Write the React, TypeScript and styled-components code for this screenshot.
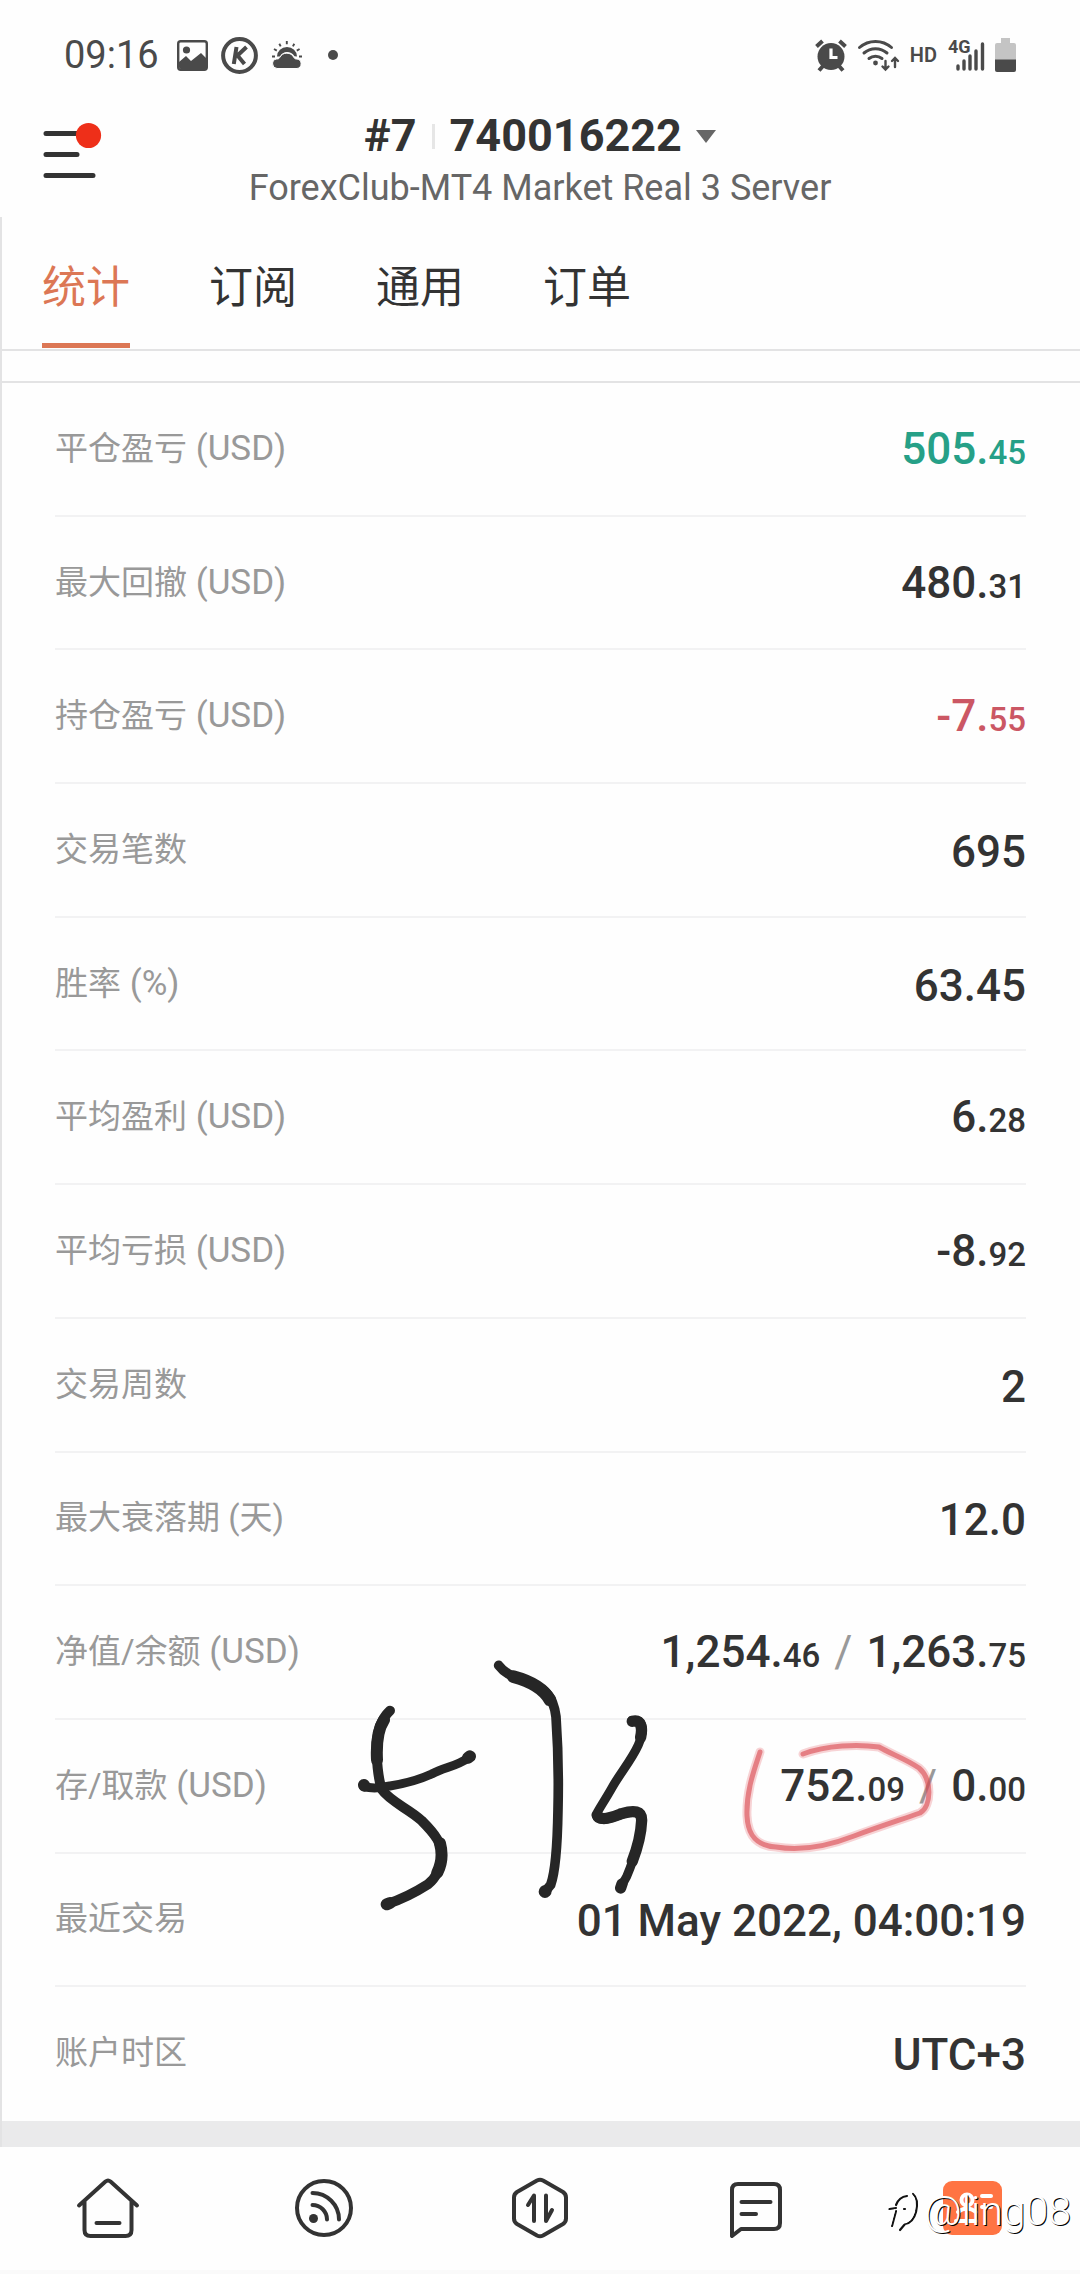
import React from "react";
import styled, { createGlobalStyle } from "styled-components";

const ink = "#333333";
const statusInk = "#4a4a4a";
const line = "#e3e3e4";
const accent = "#dc7755";

const GlobalStyle = createGlobalStyle`
  *, *::before, *::after { box-sizing: border-box; }
  body {
    margin: 0;
    background: #fefefe;
    color: ${ink};
    font-family: Roboto, "Noto Sans CJK SC", sans-serif;
  }
  button { font: inherit; color: inherit; background: none; border: 0; padding: 0; cursor: pointer; }
  a { color: inherit; text-decoration: none; }
  svg { display: block; overflow: visible; }
`;

const Page = styled.div`
  display: flex;
  flex-direction: column;
  min-height: 100vh;
`;

/* ---------- status bar ---------- */

const StatusBar = styled.div`
  display: flex;
  align-items: center;
  justify-content: space-between;
  height: 110px;
  padding: 0 64px;
  color: ${statusInk};
`;

const StatusGroup = styled.div<{ $gap: number }>`
  display: flex;
  align-items: center;
  gap: ${(p) => p.$gap}px;
`;

const Clock = styled.time`
  font-size: 38px;
  line-height: 44px;
  margin-right: 5px;
`;

const HdMark = styled.span`
  font-size: 20px;
  line-height: 24px;
  font-weight: 600;
`;

const Dot = styled.span`
  width: 10px;
  height: 10px;
  margin-left: 12px;
  border-radius: 50%;
  background: ${statusInk};
`;

const Signal = styled.span`
  position: relative;
  width: 36px;
  height: 32px;
`;

const SignalLabel = styled.span`
  position: absolute;
  left: 0;
  top: -2px;
  font-size: 18px;
  line-height: 20px;
  font-weight: 700;
`;

/* ---------- header ---------- */

const Header = styled.header`
  display: grid;
  grid-template-columns: 1fr auto 1fr;
  height: 107px;
  padding: 0 43px;
`;

const MenuButton = styled.button`
  justify-self: start;
  align-self: start;
  margin-top: 12px;
`;

const Account = styled.div`
  display: flex;
  flex-direction: column;
  align-items: center;
`;

const AccountButton = styled.button`
  display: flex;
  align-items: center;
  height: 52px;
  font-size: 45px;
  line-height: 52px;
  font-weight: 700;
`;

const TitleRule = styled.span`
  width: 3px;
  height: 25px;
  margin: 0 15px;
  background: #e6e6e6;
`;

const Caret = styled.span`
  margin-left: 14px;
  border: 10px solid transparent;
  border-top: 13px solid #666666;
  border-bottom: 0;
`;

const ServerName = styled.div`
  font-size: 36px;
  line-height: 52px;
  color: #666666;
`;

/* ---------- content ---------- */

const Panel = styled.main`
  flex: 1;
  display: flex;
  flex-direction: column;
  border-left: 2px solid ${line};
`;

const Tabs = styled.nav`
  display: flex;
  gap: 79px;
  height: 134px;
  padding: 0 40px;
  border-bottom: 2px solid ${line};
`;

const Tab = styled.a<{ $active?: boolean }>`
  height: 131px;
  font-size: 44px;
  line-height: 142px;
  color: ${(p) => (p.$active ? accent : ink)};
  border-bottom: 5px solid ${(p) => (p.$active ? accent : "transparent")};
`;

const Spacer = styled.div`
  height: 32px;
  border-bottom: 2px solid ${line};
`;

const Stats = styled.dl`
  flex: 1;
  display: flex;
  flex-direction: column;
  margin: 0;
  padding: 0 54px 0 53px;
`;

const Row = styled.div`
  position: relative;
  flex: 1 0 120px;
  display: flex;
  align-items: center;
  justify-content: space-between;
  border-bottom: 2px solid #f2f2f3;
  &:last-child { border-bottom-color: transparent; }
`;

const Label = styled.dt`
  font-size: 33px;
  line-height: 44px;
  color: #999999;
`;

const Unit = styled.span`
  font-size: 35px;
`;

const tones = { plain: ink, gain: "#26a087", loss: "#cb5764" };
type Tone = keyof typeof tones;

const Value = styled.dd<{ $tone: Tone }>`
  margin: 0;
  padding-top: 4px;
  font-size: 44px;
  line-height: 52px;
  font-weight: 500;
  color: ${(p) => tones[p.$tone]};
`;

const Minor = styled.span`
  font-size: 33px;
`;

const Slash = styled.span`
  margin: 0 14px;
  font-weight: 400;
  color: #999999;
`;

const Doodle = styled.svg`
  position: absolute;
  right: 86px;
  top: -65px;
  pointer-events: none;
`;

const Band = styled.div`
  height: 26px;
  background: #eaeaeb;
`;

/* ---------- bottom bar ---------- */

const BottomBar = styled.nav`
  position: relative;
  display: grid;
  grid-template-columns: repeat(5, 1fr);
  height: 127px;
  padding-bottom: 1px;
  border-bottom: 4px solid #fafafa;
`;

const NavLink = styled.a`
  display: flex;
  align-items: center;
  justify-content: center;
`;

const Watermark = styled.div`
  position: absolute;
  right: 9px;
  top: 38px;
  display: flex;
  align-items: center;
  gap: 4px;
  font-size: 41px;
  line-height: 52px;
  font-weight: 300;
  color: #ffffff;
  text-shadow: 1px 1px 0 #000000;
`;

type Amount = { major: string; minor?: string };
type Stat = { label: string; unit?: string; values: Amount[]; tone?: Tone; doodle?: boolean };

const stats: Stat[] = [
  { label: "平仓盈亏", unit: "(USD)", values: [{ major: "505.", minor: "45" }], tone: "gain" },
  { label: "最大回撤", unit: "(USD)", values: [{ major: "480.", minor: "31" }] },
  { label: "持仓盈亏", unit: "(USD)", values: [{ major: "-7.", minor: "55" }], tone: "loss" },
  { label: "交易笔数", values: [{ major: "695" }] },
  { label: "胜率", unit: "(%)", values: [{ major: "63.45" }] },
  { label: "平均盈利", unit: "(USD)", values: [{ major: "6.", minor: "28" }] },
  { label: "平均亏损", unit: "(USD)", values: [{ major: "-8.", minor: "92" }] },
  { label: "交易周数", values: [{ major: "2" }] },
  { label: "最大衰落期 (天)", values: [{ major: "12.0" }] },
  {
    label: "净值/余额",
    unit: "(USD)",
    values: [{ major: "1,254.", minor: "46" }, { major: "1,263.", minor: "75" }],
  },
  {
    label: "存/取款",
    unit: "(USD)",
    values: [{ major: "752.", minor: "09" }, { major: "0.", minor: "00" }],
    doodle: true,
  },
  { label: "最近交易", values: [{ major: "01 May 2022, 04:00:19" }] },
  { label: "账户时区", values: [{ major: "UTC+3" }] },
];

const PictureIcon = () => (
  <svg width="31" height="31" viewBox="0 0 31 31" aria-hidden="true">
    <rect x="1.2" y="1.2" width="28.6" height="28.6" rx="2.5" fill="none" stroke={statusInk} strokeWidth="2.4" />
    <circle cx="9.5" cy="10" r="3.6" fill={statusInk} />
    <path d="M2 22l7-6 5 5 10-8 6 6v8a2 2 0 0 1-2 2H4a2 2 0 0 1-2-2z" fill={statusInk} />
  </svg>
);

const KIcon = () => (
  <svg width="37" height="37" viewBox="0 0 37 37" fill="none" stroke={statusInk} aria-hidden="true">
    <circle cx="18.5" cy="18.5" r="16.4" strokeWidth="4" />
    <path d="M15.500 10L12.800 27M25.500 10L16.500 18.500L23.500 27" strokeWidth="4" />
  </svg>
);

const WeatherIcon = () => (
  <svg width="32" height="28" viewBox="0 0 32 28" aria-hidden="true">
    <path
      d="M1 15.500h3M3 8l2.800 1.600M8.300 2.800l1.400 2.600M15.800 0v3.200M23.300 2.800l-1.400 2.600M28.600 8l-2.800 1.600M28 15.500h3"
      stroke={statusInk}
      strokeWidth="1.900"
    />
    <path d="M6 15.500a10 9.500 0 0 1 20 0l-2.500-.3c-2-3-4.500-4.200-7.500-4.200s-5.500 1.500-7 4.500z" fill={statusInk} />
    <path
      d="M6 27.500a4.800 4.800 0 0 1-.5-9.500c1.500 0 2.500-.2 3.200-1.500a8 8 0 0 1 14.200 0c.8 1.400 1.600 1.500 3.100 1.500a4.800 4.800 0 0 1 0 9.500z"
      fill={statusInk}
      stroke="#fefefe"
      strokeWidth="1"
    />
  </svg>
);

const AlarmIcon = () => (
  <svg width="32" height="33" viewBox="0 0 32 33" aria-hidden="true">
    <circle cx="16" cy="17.500" r="13.500" fill={statusInk} />
    <path d="M1.500 7.500l6-5.500M30.500 7.500l-6-5.500M4 31.500l4-4.500M28 31.500l-4-4.500" stroke={statusInk} strokeWidth="4" />
    <path d="M16 9.500v9h6.500" fill="none" stroke="#ffffff" strokeWidth="3.200" />
  </svg>
);

const WifiIcon = () => (
  <svg width="41" height="32" viewBox="0 0 41 32" fill="none" stroke={statusInk} strokeLinecap="round" aria-hidden="true">
    <path d="M1.500 8.500a24 24 0 0 1 32 0M6 14a17.500 17.500 0 0 1 23 0M11 19.500a10.500 10.500 0 0 1 13 0" strokeWidth="3" />
    <circle cx="17.500" cy="24" r="2.400" fill={statusInk} stroke="none" />
    <path d="M27.500 22v8M24.500 27.500l3 3 3-3M37 28v-8M34 22l3-3 3 3" strokeWidth="2.400" />
  </svg>
);

const BarsIcon = () => (
  <svg width="36" height="32" viewBox="0 0 36 32" aria-hidden="true">
    <path d="M10 30v-3M16 30v-8M22 30V17M28 30V12M34.500 30V5" stroke={statusInk} strokeWidth="3.400" strokeLinecap="round" />
  </svg>
);

const BatteryIcon = () => (
  <svg width="21" height="34" viewBox="0 0 21 34" aria-hidden="true">
    <path d="M6 0h9v5h4a2 2 0 0 1 2 2v15H0V7a2 2 0 0 1 2-2h4z" fill="#c4c4c4" />
    <path d="M0 21.500h21V32a2 2 0 0 1-2 2H2a2 2 0 0 1-2-2z" fill={statusInk} />
  </svg>
);

const MenuIcon = () => (
  <svg width="58" height="58" viewBox="0 0 58 58" aria-hidden="true">
    <path d="M3 11.500h37M3 32.500h31M3 53.500h47" stroke={ink} strokeWidth="5" strokeLinecap="round" />
    <circle cx="45.500" cy="13.500" r="12.600" fill="#ee2f19" />
  </svg>
);

const redLoop =
  "M760 1752C755 1768 746 1790 747 1816C748 1838 759 1846 776 1847C806 1852 836 1843 854 1836C878 1827 900 1820 920 1813C932 1806 932 1779 919 1768C906 1759 891 1754 879 1747C858 1744 827 1745 803 1754";

const HandDrawing = () => (
  <Doodle width="590" height="260" viewBox="350 1655 590 260" fill="none" strokeLinecap="round" strokeLinejoin="round" aria-hidden="true">
    <g transform="translate(340 1650) scale(0.3333)" stroke="#262626">
      <path strokeWidth="30" d="M150 182C118 212 108 260 110 310C112 360 118 395 125 418C150 455 205 475 245 512C288 555 305 580 306 620C305 650 287 685 264 703C225 728 185 748 140 763" />
      <path strokeWidth="36" d="M132 210C112 240 109 290 111 330M300 580C308 610 306 640 292 668M140 763L150 759" />
      <path strokeWidth="27" d="M70 410C95 416 125 414 150 408C200 400 240 388 275 372C315 350 345 352 388 322" />
      <path strokeWidth="36" d="M72 405L73 407M384 323L390 319" />
      <path strokeWidth="29" d="M476 46C500 78 530 80 565 96C610 113 640 135 648 200C655 300 656 400 654 480C652 600 645 670 632 705L616 724" />
      <path strokeWidth="38" d="M520 80C565 92 610 115 630 150M615 725L616 724" />
      <path strokeWidth="27" d="M875 212C915 205 912 245 895 285C875 330 840 370 815 415C795 450 775 480 768 495C775 520 810 505 840 495C880 482 905 480 906 510C903 560 885 620 860 680L842 712" />
      <path strokeWidth="34" d="M877 214C905 208 908 235 902 262M773 497C785 515 820 500 845 491C882 480 906 482 905 512C903 560 890 600 877 634M842 714L846 702" />
    </g>
    <path d={redLoop} stroke="#e2545c" strokeOpacity="0.250" strokeWidth="9" />
    <path d={redLoop} stroke="#d9474f" strokeOpacity="0.600" strokeWidth="5" />
  </Doodle>
);

const navStroke = { fill: "none", stroke: ink, strokeWidth: 4, strokeLinecap: "round", strokeLinejoin: "round" } as const;

const HomeIcon = () => (
  <svg width="64" height="64" viewBox="0 0 64 64" {...navStroke}>
    <path d="M3 29.500L29.500 5.500Q32 3.500 34.500 5.500L61 29.500M8.500 25.500V54Q8.500 60 14.500 60H49.500Q55.500 60 55.500 54V25.500M20.500 47H43.500" />
  </svg>
);

const FeedIcon = () => (
  <svg width="64" height="64" viewBox="0 0 64 64" {...navStroke}>
    <circle cx="32" cy="32" r="27" />
    <circle cx="21.500" cy="42.500" r="4.500" fill={ink} stroke="none" />
    <path d="M20.500 17A26.500 26.500 0 0 1 47 43.500M20.500 29A14.500 14.500 0 0 1 35 43.500" />
  </svg>
);

const TradeIcon = () => (
  <svg width="64" height="64" viewBox="0 0 64 64" {...navStroke}>
    <path d="M29 4.500Q32 3 35 4.500L55 16Q58 18 58 21.500V42.500Q58 46 55 48L35 59.500Q32 61 29 59.500L9 48Q6 46 6 42.500V21.500Q6 18 9 16Z" />
    <path d="M26 45V19.500L20 29M38 19.500V45L44 34" />
  </svg>
);

const ChatIcon = () => (
  <svg width="64" height="64" viewBox="0 0 64 64" {...navStroke}>
    <path d="M8 60V14Q8 8 14 8H50Q56 8 56 14V47Q56 53 50 53H17ZM17.500 26H46.500M17.500 38H32" />
  </svg>
);

const ProfileIcon = () => (
  <svg width="59" height="54" viewBox="0 0 59 54" aria-hidden="true">
    <rect width="59" height="54" rx="9" fill="#ff7443" />
    <g fill="none" stroke="#ffffff" strokeWidth="4" strokeLinecap="round">
      <circle cx="24" cy="19" r="5.500" />
      <path d="M15 31Q24 24 33 31M39 15H48M13 40H33M39 26H48" />
    </g>
  </svg>
);

const GhostMark = () => (
  <svg width="32" height="42" viewBox="0 0 32 42" fill="none" strokeLinecap="round" aria-hidden="true">
    <path d="M4 36L8 21M1.500 19L8 18M8 15Q11 7 19 6M25 4Q31 9 28 22Q25 33 17 34L12 40M16 19h1" stroke="#111111" strokeWidth="2.200" />
    <path d="M2.500 35L6.500 20M23 4Q29 10 26 22Q23 32 15 33" stroke="#ffffff" strokeWidth="1.600" />
  </svg>
);

const navItems = [
  { name: "首页", href: "#home", Icon: HomeIcon },
  { name: "动态", href: "#feed", Icon: FeedIcon },
  { name: "交易", href: "#trade", Icon: TradeIcon },
  { name: "消息", href: "#messages", Icon: ChatIcon },
  { name: "我的", href: "#account", Icon: ProfileIcon },
];

const tabs = ["统计", "订阅", "通用", "订单"];

export default function App() {
  return (
    <Page>
      <GlobalStyle />
      <StatusBar>
        <StatusGroup $gap={13}>
          <Clock>09:16</Clock>
          <PictureIcon />
          <KIcon />
          <WeatherIcon />
          <Dot />
        </StatusGroup>
        <StatusGroup $gap={11}>
          <AlarmIcon />
          <WifiIcon />
          <HdMark>HD</HdMark>
          <Signal>
            <BarsIcon />
            <SignalLabel>4G</SignalLabel>
          </Signal>
          <BatteryIcon />
        </StatusGroup>
      </StatusBar>

      <Header>
        <MenuButton type="button" aria-label="菜单">
          <MenuIcon />
        </MenuButton>
        <Account>
          <AccountButton type="button">
            #7
            <TitleRule />
            740016222
            <Caret />
          </AccountButton>
          <ServerName>ForexClub-MT4 Market Real 3 Server</ServerName>
        </Account>
      </Header>

      <Panel>
        <Tabs>
          {tabs.map((name, i) => (
            <Tab key={name} href={`#tab-${i + 1}`} $active={i === 0}>
              {name}
            </Tab>
          ))}
        </Tabs>
        <Spacer />
        <Stats>
          {stats.map(({ label, unit, values, tone = "plain", doodle }) => (
            <Row key={label}>
              <Label>
                {label}
                {unit && <Unit> {unit}</Unit>}
              </Label>
              <Value $tone={tone}>
                {values.map((v, i) => (
                  <React.Fragment key={v.major}>
                    {i > 0 && <Slash>/</Slash>}
                    {v.major}
                    {v.minor && <Minor>{v.minor}</Minor>}
                  </React.Fragment>
                ))}
                {doodle && <HandDrawing />}
              </Value>
            </Row>
          ))}
        </Stats>
        <Band />
      </Panel>

      <BottomBar>
        {navItems.map(({ name, href, Icon }) => (
          <NavLink key={name} href={href} aria-label={name}>
            <Icon />
          </NavLink>
        ))}
        <Watermark>
          <GhostMark />
          @ling08
        </Watermark>
      </BottomBar>
    </Page>
  );
}
